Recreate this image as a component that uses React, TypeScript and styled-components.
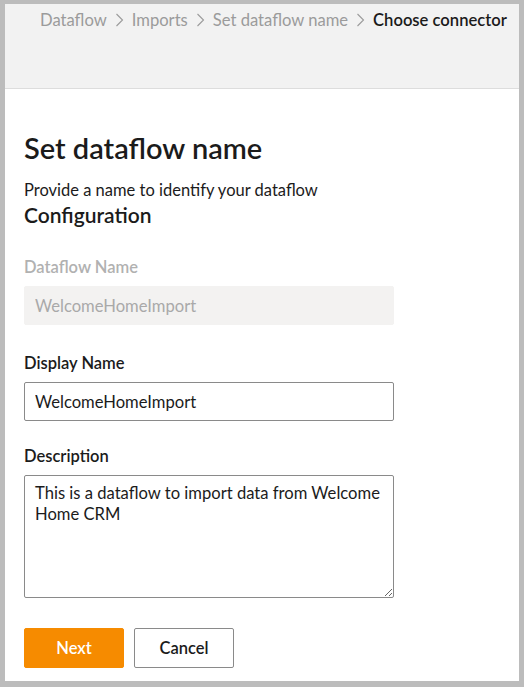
import React from 'react'
import styled, { createGlobalStyle } from 'styled-components'

const GlobalStyle = createGlobalStyle`
  html, body {
    margin: 0;
    padding: 0;
    background: #bcbcbc;
  }
  * {
    box-sizing: border-box;
  }
`

const Frame = styled.div`
  width: 524px;
  height: 687px;
  border-style: solid;
  border-color: #bcbcbc;
  border-width: 4px 5px 6px 5px;
  background: #ffffff;
  font-family: Lato, 'Open Sans', sans-serif;
  color: #1b1b1b;
  display: flex;
  flex-direction: column;
  overflow: hidden;
`

const Header = styled.div`
  height: 85px;
  background: #f2f2f2;
  border-bottom: 1px solid #dddddd;
  padding: 6px 0 0 35px;
  flex-shrink: 0;
`

const Crumbs = styled.nav`
  display: flex;
  align-items: center;
  gap: 8px;
  font-size: 16.6px;
  white-space: nowrap;
`

const Crumb = styled.span<{ $current?: boolean }>`
  color: ${(p) => (p.$current ? '#1b1b1b' : '#9b9b9b')};
  font-weight: ${(p) => (p.$current ? 600 : 400)};
`

const Chevron = styled.svg`
  width: 9px;
  height: 14px;
  flex-shrink: 0;
`

const Body = styled.div`
  padding: 41px 0 0 19px;
  display: flex;
  flex-direction: column;
`

const Title = styled.h1`
  margin: 0;
  font-size: 29px;
  font-weight: 600;
  line-height: 36px;
`

const Subtitle = styled.p`
  margin: 14px 0 0;
  font-size: 16.5px;
  line-height: 20px;
`

const Section = styled.h2`
  margin: 2px 0 0;
  font-size: 21px;
  font-weight: 600;
  line-height: 26px;
`

const Field = styled.div<{ $top: number }>`
  display: flex;
  flex-direction: column;
  gap: 9px;
  margin-top: ${(p) => p.$top}px;
  width: 370px;
`

const Label = styled.label<{ $disabled?: boolean }>`
  font-size: 16.5px;
  font-weight: 600;
  line-height: 20px;
  color: ${(p) => (p.$disabled ? '#b1b1b1' : '#1b1b1b')};
`

const Input = styled.input`
  height: 39px;
  width: 100%;
  border: 1px solid #8a8a8a;
  border-radius: 2px;
  padding: 0 10px;
  font-family: inherit;
  font-size: 16.6px;
  color: #1b1b1b;
  background: #ffffff;
  outline: none;

  &:disabled {
    border-color: #f3f2f1;
    background: #f3f2f1;
    color: #a9a9a9;
  }
`

const TextArea = styled.textarea`
  height: 123px;
  width: 100%;
  border: 1px solid #8a8a8a;
  border-radius: 2px;
  padding: 7px 10px;
  font-family: inherit;
  font-size: 16.6px;
  line-height: 21px;
  color: #1b1b1b;
  resize: vertical;
  outline: none;
`

const Actions = styled.div`
  display: flex;
  gap: 10px;
  margin-top: 30px;
`

const Button = styled.button<{ $primary?: boolean }>`
  width: 100px;
  height: 40px;
  border-radius: 2px;
  font-family: inherit;
  font-size: 16.5px;
  font-weight: 600;
  cursor: pointer;
  border: 1px solid ${(p) => (p.$primary ? '#f68b00' : '#8a8a8a')};
  background: ${(p) => (p.$primary ? '#f68b00' : '#ffffff')};
  color: ${(p) => (p.$primary ? '#ffffff' : '#1b1b1b')};
`

const Sep = () => (
  <Chevron viewBox="0 0 9 14">
    <path d="M1.5 1 L7.5 7 L1.5 13" fill="none" stroke="#9b9b9b" strokeWidth="1.1" />
  </Chevron>
)

const crumbs = ['Dataflow', 'Imports', 'Set dataflow name']

export default function App() {
  return (
    <>
      <GlobalStyle />
      <Frame>
        <Header>
          <Crumbs>
            {crumbs.map((c) => (
              <React.Fragment key={c}>
                <Crumb>{c}</Crumb>
                <Sep />
              </React.Fragment>
            ))}
            <Crumb $current>Choose connector</Crumb>
          </Crumbs>
        </Header>
        <Body>
          <Title>Set dataflow name</Title>
          <Subtitle>Provide a name to identify your dataflow</Subtitle>
          <Section>Configuration</Section>

          <Field $top={29}>
            <Label $disabled>Dataflow Name</Label>
            <Input disabled defaultValue="WelcomeHomeImport" />
          </Field>

          <Field $top={28}>
            <Label>Display Name</Label>
            <Input defaultValue="WelcomeHomeImport" />
          </Field>

          <Field $top={25}>
            <Label>Description</Label>
            <TextArea defaultValue="This is a dataflow to import data from Welcome Home CRM" />
          </Field>

          <Actions>
            <Button $primary>Next</Button>
            <Button>Cancel</Button>
          </Actions>
        </Body>
      </Frame>
    </>
  )
}
